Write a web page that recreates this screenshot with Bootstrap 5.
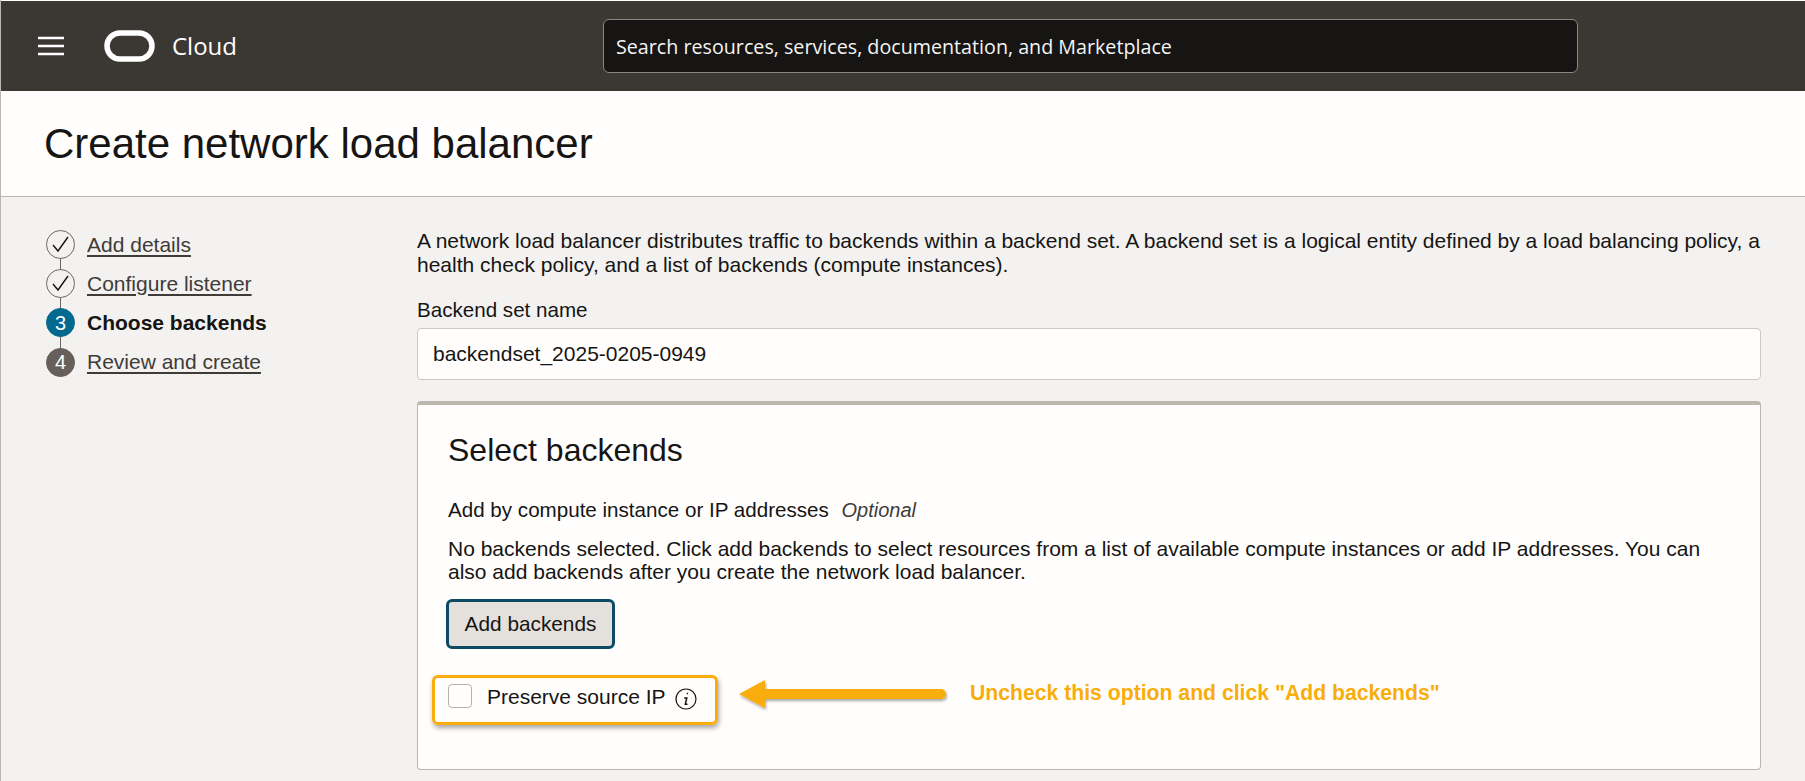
<!DOCTYPE html>
<html lang="en"><head><meta charset="utf-8"><title>Create network load balancer</title>
<link href="https://cdn.jsdelivr.net/npm/bootstrap@5.3.0/dist/css/bootstrap.min.css" rel="stylesheet">
<style>
html,body{height:781px;overflow:hidden}
body{background:#f3f2f1;font-family:"Liberation Sans",Arial,sans-serif;color:#161513;font-size:21px;border-left:1px solid #bcb6af}
.topbar{height:91px;margin-left:-1px;background:#3b3833;border-top:1px solid #fff}
.menu-btn{width:26px;margin-left:38px}
.logo-mark{margin-left:40px;margin-right:17px}
.cloud-name{font-family:"Open Sans",sans-serif;font-size:24px;color:#fff;width:431px}
.search-box{width:975px;height:54px;background:#161513;border:1px solid #8b8883;border-radius:6px;color:#f5f4f2;font-family:"Open Sans",sans-serif;font-size:19.7px;padding:2px 0 0 12px}
.title-band{height:106px;background:#fffefd;border-bottom:1px solid #bcb6af;padding-left:43px}
.title-band h1{font-size:42px;font-weight:400;margin:0;line-height:1}
.page-body{padding:0 42px 0 45px;gap:0}
.steps{width:371px;padding-top:28px;flex:none}
.step-row{height:39.2px;gap:12px;position:relative}
.step-row a{color:#3f3c38;text-underline-offset:3px}
.step-row strong{color:#161513}
.step-dot{width:29px;height:29px;flex:none;border-radius:50%;border:1px solid #6b6762;background:#f3f2f1;font-size:20px;position:relative;z-index:1}
.step-dot.now{background:#04698f;border-color:#04698f;color:#fff}
.step-dot.todo{background:#665f5b;border-color:#665f5b;color:#fff}
.step-rule{position:absolute;left:14px;top:20px;width:1px;height:32px;background:#6b6762}
.main-col{width:1344px;flex:none;padding-top:32px}
.intro{line-height:24px;margin:0 0 21px}
.field-name{line-height:24px;margin-bottom:6px;font-size:20.6px}
.name-box{height:52px;background:#fffefd;border:1px solid #cdc8c2;border-radius:4px;padding-left:15px;margin-bottom:21px}
.panel{height:369px;background:#fffefd;border:1px solid #bcb6af;border-top:4px solid #bcb6af;border-radius:4px;padding:26px 30px;position:relative}
.panel h2{font-size:32px;font-weight:400;line-height:38px;margin:0 0 29px}
.panel-label{line-height:24px;margin-bottom:15px;font-size:20.6px}
.panel-label i{color:#3f3c38;margin-left:7px;font-size:20px}
.panel-help{line-height:23px;margin-bottom:16px;width:1290px}
.add-btn{width:169px;height:50px;margin-left:-2px;background:#e4e1dd;border:3px solid #0e4a63;border-radius:6px;font-size:20.8px;color:#161513;padding:0}
.check-row{position:absolute;left:14px;top:270px;width:286px;height:50px;border:3px solid #f9ad0a;border-radius:6px;box-shadow:1px 3px 5px rgba(0,0,0,.35);padding:6px 0 0 13px}
.check-box{width:24px;height:24px;border:1px solid #b5b0aa;border-radius:4px;background:#fffefd}
.check-text{margin:1px 0 0 15px;line-height:24px}
.info-mark{margin-left:9px}
.pointer{position:absolute;left:320px;top:274px}
.note{position:absolute;left:552px;top:276px;font-weight:700;font-size:21.2px;line-height:24px;color:#f9ad0a;white-space:nowrap}
</style></head>
<body>
<header class="topbar d-flex align-items-center">
<svg class="menu-btn" height="20" viewBox="0 0 26 20" role="img" aria-label="Menu"><path d="M0 2h26M0 10h26M0 18h26" stroke="#fff" stroke-width="2.4"/></svg>
<svg class="logo-mark" width="51" height="32" viewBox="0 0 51 32" role="img" aria-label="Oracle logo"><rect x="3" y="3" width="45" height="26" rx="13" fill="none" stroke="#fff" stroke-width="5.5"/></svg>
<span class="cloud-name">Cloud</span>
<div class="search-box d-flex align-items-center">Search resources, services, documentation, and Marketplace</div>
</header>
<div class="title-band d-flex align-items-center"><h1>Create network load balancer</h1></div>
<div class="page-body d-flex">
<nav class="steps">
<div class="step-row d-flex align-items-center"><span class="step-rule"></span><span class="step-dot d-flex align-items-center justify-content-center"><svg width="19" height="17" viewBox="0 0 19 17"><path d="M2 9l5 6L17 1" fill="none" stroke="#161513" stroke-width="1.4"/></svg></span><a href="#">Add details</a></div>
<div class="step-row d-flex align-items-center"><span class="step-rule"></span><span class="step-dot d-flex align-items-center justify-content-center"><svg width="19" height="17" viewBox="0 0 19 17"><path d="M2 9l5 6L17 1" fill="none" stroke="#161513" stroke-width="1.4"/></svg></span><a href="#">Configure listener</a></div>
<div class="step-row d-flex align-items-center"><span class="step-rule"></span><span class="step-dot now d-flex align-items-center justify-content-center">3</span><strong>Choose backends</strong></div>
<div class="step-row d-flex align-items-center"><span class="step-dot todo d-flex align-items-center justify-content-center">4</span><a href="#">Review and create</a></div>
</nav>
<main class="main-col">
<p class="intro">A network load balancer distributes traffic to backends within a backend set. A backend set is a logical entity defined by a load balancing policy, a health check policy, and a list of backends (compute instances).</p>
<div class="field-name">Backend set name</div>
<div class="name-box d-flex align-items-center">backendset_2025-0205-0949</div>
<section class="panel">
<h2>Select backends</h2>
<div class="panel-label">Add by compute instance or IP addresses <i>Optional</i></div>
<div class="panel-help">No backends selected. Click add backends to select resources from a list of available compute instances or add IP addresses. You can also add backends after you create the network load balancer.</div>
<button class="add-btn" type="button">Add backends</button>
<div class="check-row d-flex align-items-start"><span class="check-box"></span><span class="check-text">Preserve source IP</span>
<svg class="info-mark mt-1" width="22" height="22" viewBox="0 0 22 22" role="img" aria-label="Info"><circle cx="11" cy="11" r="10" fill="none" stroke="#161513" stroke-width="1.2"/><path d="M11.7 5.4h1.3M9.2 10h2.6l-1.5 6.2h2.2" fill="none" stroke="#161513" stroke-width="1.5"/></svg></div>
<svg class="pointer" width="210" height="36" viewBox="0 0 210 36" role="img" aria-label="Arrow pointing left"><defs><filter id="soft" x="-5%" y="-20%" width="110%" height="150%"><feDropShadow dx="1" dy="2" stdDeviation="1.6" flood-opacity=".35"/></filter></defs><path d="M1 15L27 1v9h176a5 5 0 0 1 0 10H27v9z" fill="#f9ad0a" filter="url(#soft)"/></svg>
<span class="note">Uncheck this option and click "Add backends"</span>
</section>
</main>
</div>
<script src="https://cdn.jsdelivr.net/npm/bootstrap@5.3.0/dist/js/bootstrap.bundle.min.js"></script>
</body></html>
